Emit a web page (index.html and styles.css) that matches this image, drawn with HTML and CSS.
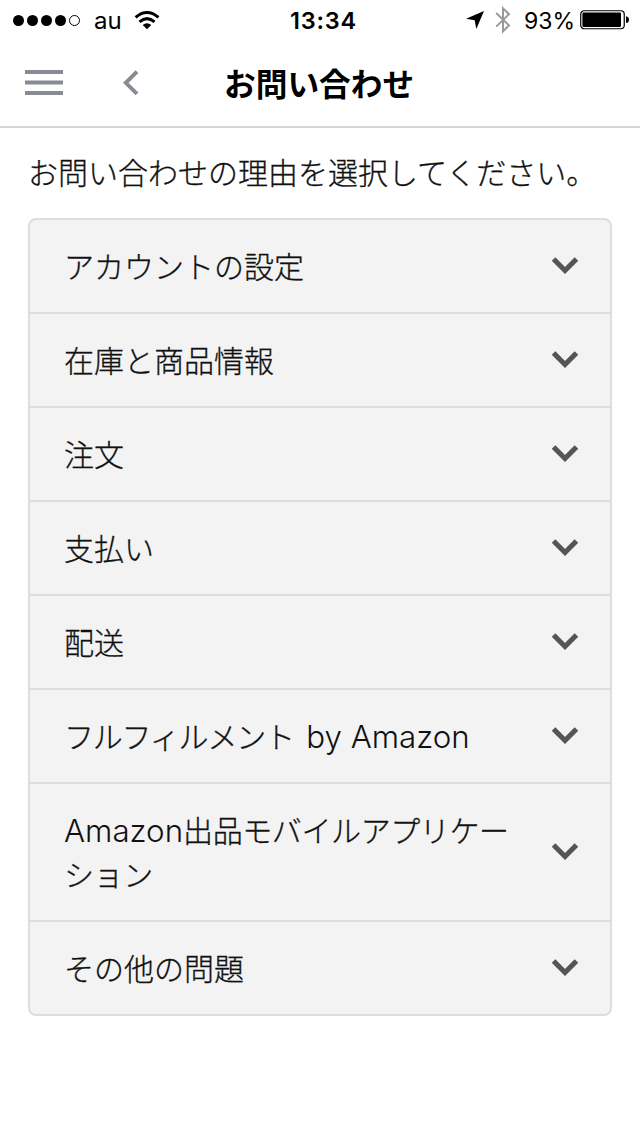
FILE: index.html
```html
<!DOCTYPE html>
<html lang="ja">
<head>
  <meta charset="UTF-8">
  <meta name="viewport" content="width=device-width, initial-scale=1.0">
  <title>お問い合わせ</title>
  <link rel="stylesheet" href="styles.css">
</head>
<body>
  <!-- ステータスバー -->
  <div class="status-bar">
    <div class="status-left">
      <div class="signal">
        <i></i><i></i><i></i><i></i><i class="empty"></i>
      </div>
      <span class="carrier">au</span>
      <svg class="wifi" width="26" height="19" viewBox="0 0 26 19">
        <path d="M1.6 6.4 Q13 -3.4 24.4 6.4" fill="none" stroke="#000" stroke-width="3"/>
        <path d="M5.5 10.8 Q13 4.4 20.5 10.8" fill="none" stroke="#000" stroke-width="3"/>
        <path d="M8.7 14 Q13 10.6 17.3 14 L13 18.3 Z"/>
      </svg>
    </div>
    <span class="clock">13:34</span>
    <div class="status-right">
      <svg class="location" width="18" height="18" viewBox="0 0 18 18">
        <path d="M18 0 L0 7.7 L8.7 9.2 L10.3 18 Z"/>
      </svg>
      <svg class="bluetooth" width="16" height="28" viewBox="0 0 16 28">
        <path d="M1.2 7 L14 19.4 L8 25.3 V2.3 L14 8.2 L1.2 20.6" fill="none" stroke="#999" stroke-width="2"/>
      </svg>
      <span class="percent">93%</span>
      <svg class="battery" width="49" height="20" viewBox="0 0 49 20">
        <rect x="0.75" y="0.75" width="43.5" height="18" rx="3.5" fill="#fff" stroke="#000" stroke-width="1.2"/>
        <rect x="2.4" y="2.4" width="38.6" height="14.7" rx="1.4"/>
        <path d="M46 6.3 Q49 7 49 9.7 Q49 12.4 46 13.1 Z"/>
      </svg>
    </div>
  </div>

  <!-- ヘッダー -->
  <header class="nav-bar">
    <svg class="menu-icon" width="38" height="26" viewBox="0 0 38 26">
      <path d="M0 2 H38 M0 12.5 H38 M0 23 H38" stroke="#878c92" stroke-width="4"/>
    </svg>
    <svg class="back-icon" width="16" height="26" viewBox="0 0 16 26">
      <path d="M14 1.7 L2.8 12.8 L14 23.9" fill="none" stroke="#878c92" stroke-width="4"/>
    </svg>
    <h1>お問い合わせ</h1>
  </header>

  <!-- 問い合わせ理由 -->
  <main>
    <p class="lead">お問い合わせの理由を選択してください。</p>
    <ul class="reason-list">
      <li><span>アカウントの設定</span><svg class="chevron" viewBox="0 0 26 18"><path d="M1.6 2 L13 13.4 L24.4 2"/></svg></li>
      <li><span>在庫と商品情報</span><svg class="chevron" viewBox="0 0 26 18"><path d="M1.6 2 L13 13.4 L24.4 2"/></svg></li>
      <li><span>注文</span><svg class="chevron" viewBox="0 0 26 18"><path d="M1.6 2 L13 13.4 L24.4 2"/></svg></li>
      <li><span>支払い</span><svg class="chevron" viewBox="0 0 26 18"><path d="M1.6 2 L13 13.4 L24.4 2"/></svg></li>
      <li><span>配送</span><svg class="chevron" viewBox="0 0 26 18"><path d="M1.6 2 L13 13.4 L24.4 2"/></svg></li>
      <li><span class="fulfillment">フルフィルメント <b class="latin">by Amazon</b></span><svg class="chevron" viewBox="0 0 26 18"><path d="M1.6 2 L13 13.4 L24.4 2"/></svg></li>
      <li><span class="mobile-app"><b class="latin">Amazon</b>出品モバイルアプリケーション</span><svg class="chevron" viewBox="0 0 26 18"><path d="M1.6 2 L13 13.4 L24.4 2"/></svg></li>
      <li><span>その他の問題</span><svg class="chevron" viewBox="0 0 26 18"><path d="M1.6 2 L13 13.4 L24.4 2"/></svg></li>
    </ul>
  </main>
</body>
</html>
```

FILE: styles.css
```css
/* 全体 */
* {
  box-sizing: border-box;
}
body {
  margin: 0;
  background-color: #fff;
  color: #111;
  font-family: "Noto Sans CJK JP", sans-serif;
  font-weight: 300;
}
svg {
  display: block;
  flex: none;
}

/* ステータスバー */
.status-bar {
  display: grid;
  grid-template-columns: 1fr auto 1fr;
  align-items: center;
  height: 40px;
  padding: 0 11px 0 13px;
  color: #000;
  font-family: Inter, sans-serif;
  font-size: 24px;
  line-height: 38px;
}
.status-left,
.status-right {
  display: flex;
  align-items: center;
}
.status-right {
  justify-content: flex-end;
}
.signal {
  display: flex;
  gap: 3px;
}
.signal i {
  width: 11px;
  height: 11px;
  border-radius: 50%;
  background-color: #000;
}
.signal .empty {
  background-color: #fff;
  border: 1px solid #000;
}
.carrier {
  margin: 0 12px 0 14px;
  padding-top: 2px;
  font-size: 24px;
  font-weight: 400;
}
.clock {
  padding: 2px 0 0 5px;
  font-weight: 600;
  font-size: 23.5px;
  letter-spacing: 0.8px;
}
.bluetooth {
  margin: 0 13px 0 11px;
}
.percent {
  margin-right: 5px;
  padding-top: 2px;
  font-weight: 400;
  font-size: 23px;
}

/* ヘッダー */
.nav-bar {
  display: grid;
  grid-template-columns: 98px 101px 1fr 200px;
  align-items: center;
  height: 88px;
  padding-left: 25px;
  padding-right: 25px;
  border-bottom: 2px solid #d5d5d5;
}
.nav-bar h1 {
  margin: 0;
  padding-bottom: 3px;
  color: #000;
  font-size: 31.7px;
  font-weight: 700;
  line-height: 44px;
  white-space: nowrap;
}

/* 問い合わせ理由 */
main {
  padding: 21px 28px 0;
  -webkit-text-stroke: 0.3px #111;
}
.lead {
  margin: 0 0 25px;
  font-size: 30px;
  line-height: 44px;
}
.reason-list {
  list-style: none;
  margin: 0;
  padding: 0;
  border: 2px solid #ddd;
  border-radius: 8px;
  background-color: #f3f3f3;
}
.reason-list li {
  display: flex;
  align-items: center;
  justify-content: space-between;
  padding: 24px 32px 24px 34px;
  font-size: 30px;
  line-height: 44px;
}
.reason-list li + li {
  border-top: 2px solid #ddd;
}
.reason-list span {
  max-width: 468px;
  margin: -1px 0 1px;
}
.fulfillment {
  letter-spacing: -1.2px;
}
.fulfillment .latin {
  margin-left: 7px;
}
.mobile-app {
  letter-spacing: -0.4px;
}
.latin {
  font-family: Inter, sans-serif;
  font-size: 31.3px;
  font-weight: 300;
  letter-spacing: 0;
  line-height: 1;
  -webkit-text-stroke: 0;
}
.chevron {
  width: 26px;
  height: 18px;
  fill: none;
  stroke: #555;
  stroke-width: 5;
}
```
